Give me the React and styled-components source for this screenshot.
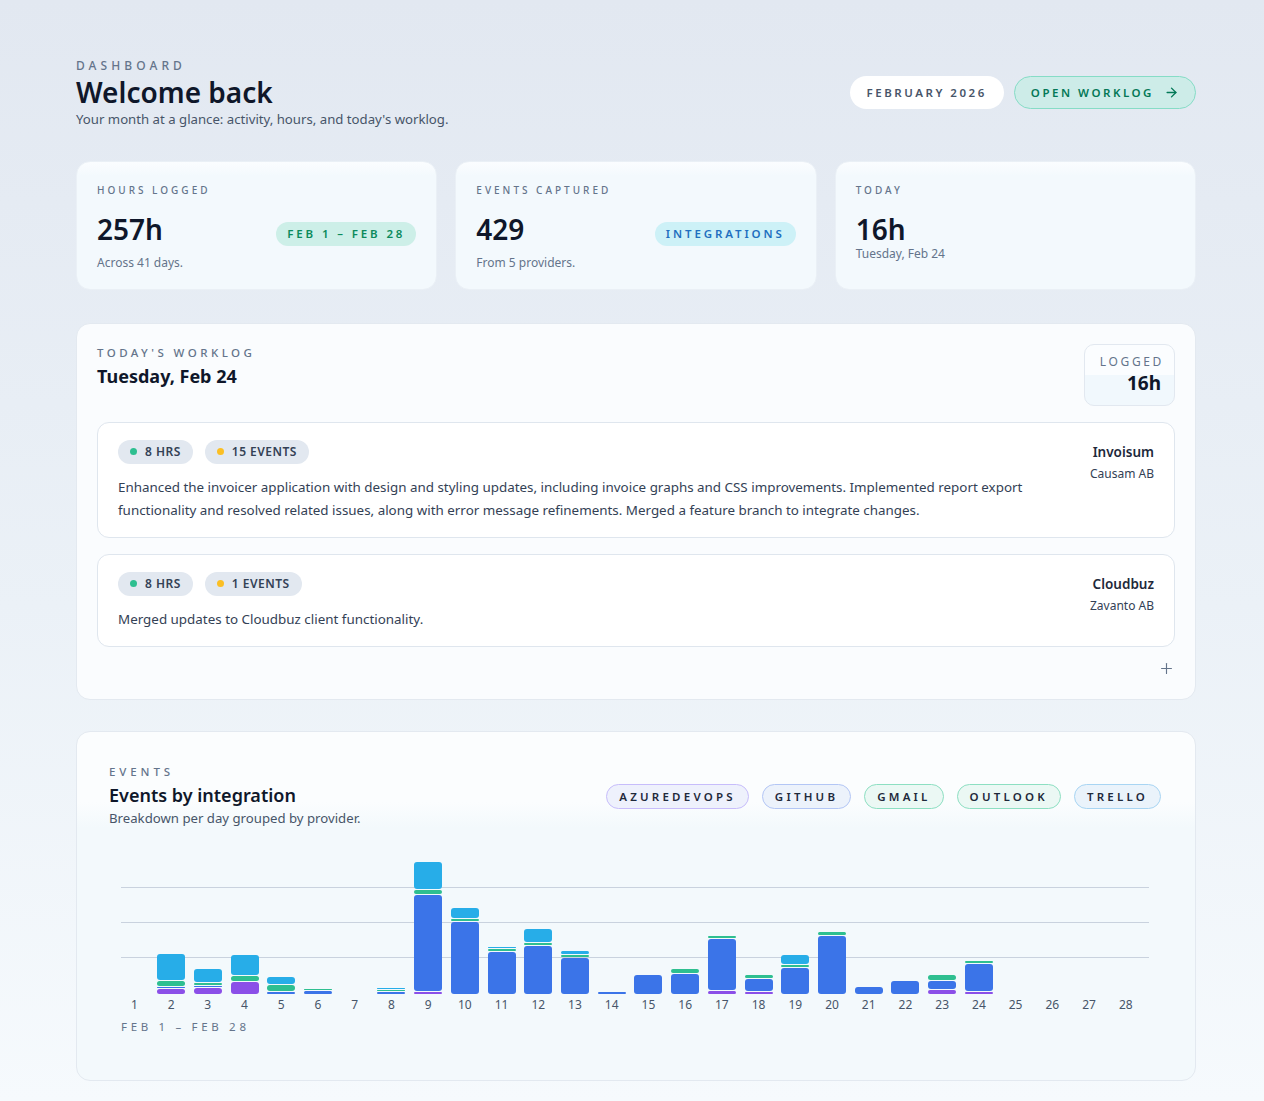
import React from 'react'
import styled, { createGlobalStyle } from 'styled-components';
import { ArrowRight, Plus } from 'lucide-react';

const GlobalStyle = createGlobalStyle`
  * { box-sizing: border-box; }
  body {
    margin: 0;
    font-family: "Segoe UI", "Noto Sans", sans-serif;
    color: #0f172a;
    background: linear-gradient(180deg, #e2e8f1 0%, #ebf1f7 55%, #f6fafd 100%);
    min-height: 1101px;
  }
`;

const Page = styled.div`
  width: 1120px;
  margin-left: 76px;
  padding: 58px 0 20px;
`;

const Header = styled.header`
  display: flex;
  align-items: center;
  justify-content: space-between;
`;

const Eyebrow = styled.div`
  font-size: ${p => p.$size || 11}px;
  letter-spacing: ${p => p.$track || 0.3}em;
  text-transform: uppercase;
  color: #64748b;
  font-weight: 500;
  line-height: 1.3;
`;

const Title = styled.h1`
  margin: 2px 0 0;
  font-size: 28px;
  font-weight: 600;
  line-height: 1.15;
  color: #0f172a;
`;

const Subtitle = styled.p`
  margin: ${p => p.$mt || 2}px 0 0;
  font-size: 13.2px;
  color: #475569;
`;

const Actions = styled.div`
  display: flex;
  gap: 10px;
`;

const Pill = styled.div`
  display: inline-flex;
  align-items: center;
  gap: 10px;
  height: 33px;
  padding: 0 16px;
  border-radius: 17px;
  font-size: 11.5px;
  font-weight: 600;
  letter-spacing: 0.22em;
  background: ${p => p.$bg || '#fff'};
  color: ${p => p.$color || '#475569'};
  border: 1px solid ${p => p.$border || 'transparent'};
`;

const Stats = styled.div`
  display: grid;
  grid-template-columns: repeat(3, 1fr);
  gap: 18px;
  margin-top: 33px;
`;

const StatCard = styled.div`
  height: 129px;
  padding: 22px 20px 0;
  border-radius: 14px;
  border: 1px solid #eaf0f6;
  background: linear-gradient(180deg, #fbfdff 0px, #f3f9fd 14px, #f3f9fd 100%);
`;

const StatRow = styled.div`
  display: flex;
  align-items: flex-end;
  justify-content: space-between;
  margin-top: 16px;
`;

const StatValue = styled.div`
  font-size: 28px;
  font-weight: 600;
  line-height: 32px;
  color: #0f172a;
`;

const StatNote = styled.div`
  font-size: 12px;
  color: #64748b;
  margin-top: ${p => p.$tight ? 0 : 9}px;
`;

const Tag = styled.span`
  display: inline-flex;
  align-items: center;
  height: 24px;
  padding: 0 11px;
  border-radius: 12px;
  font-size: 11.5px;
  font-weight: 600;
  letter-spacing: 0.25em;
  margin-bottom: -1px;
  background: ${p => p.$bg};
  color: ${p => p.$color};
`;

const Panel = styled.section`
  margin-top: ${p => p.$mt || 33}px;
  border-radius: 14px;
  border: 1px solid #e3e9f0;
  background: #fafcfe;
  padding: ${p => p.$pad || '20px 20px 22px'};
`;

const EventsPanel = styled(Panel)`
  background: linear-gradient(180deg, #fbfdfe 0, #fbfdfe 70px, #f3f9fc 96px);
`;

const PanelHead = styled.div`
  display: flex;
  justify-content: space-between;
  align-items: ${p => p.$center ? 'center' : 'flex-start'};
`;

const HeadText = styled.div`
  padding-top: ${p => p.$pt || 0}px;
`;

const DayTitle = styled.div`
  font-size: 18px;
  font-weight: ${p => p.$weight || 700};
  color: #0f172a;
  margin-top: ${p => p.$mt || 2}px;
`;

const LoggedBox = styled.div`
  width: 91px;
  height: 62px;
  border: 1px solid #e2e8f0;
  border-radius: 10px;
  background: linear-gradient(180deg, #fbfdff 50%, #f1f8fd 50%);
  text-align: right;
  padding: 8px 13px 0;
`;

const LoggedLabel = styled.div`
  font-size: 12px;
  letter-spacing: 0.22em;
  color: #64748b;
  margin-right: -3px;
`;

const LoggedValue = styled.div`
  font-size: 19px;
  font-weight: 700;
  color: #0f172a;
  line-height: 26px;
`;

const Entries = styled.div`
  display: flex;
  flex-direction: column;
  gap: 16px;
  margin-top: 16px;
`;

const Entry = styled.div`
  display: flex;
  gap: 20px;
  padding: 17px 20px 15px;
  border: 1px solid #dfe6ee;
  border-radius: 12px;
  background: #fff;
`;

const EntryMain = styled.div`
  flex: 1;
`;

const Badges = styled.div`
  display: flex;
  gap: 12px;
`;

const Badge = styled.span`
  display: inline-flex;
  align-items: center;
  gap: 8px;
  height: 24px;
  padding: 0 12px;
  border-radius: 12px;
  background: #e2e8f0;
  color: #334155;
  font-size: 12px;
  font-weight: 600;
  letter-spacing: 0.04em;
`;

const Dot = styled.i`
  width: 7px;
  height: 7px;
  border-radius: 50%;
  background: ${p => p.$color};
`;

const Desc = styled.p`
  margin: 12px 0 0;
  font-size: 13.4px;
  line-height: 23px;
  color: #334155;
`;

const Meta = styled.div`
  width: 90px;
  text-align: right;
  padding-top: 3px;
`;

const Client = styled.div`
  font-size: 13.5px;
  font-weight: 600;
  color: #1e293b;
`;

const Company = styled.div`
  font-size: 12px;
  color: #334155;
  margin-top: 4px;
`;

const AddRow = styled.div`
  display: flex;
  justify-content: flex-end;
  padding: 13px 0 0;
  color: #64748b;
`;

const Providers = styled.div`
  display: flex;
  gap: 13px;
  margin-top: 2px;
`;

const Provider = styled.span`
  display: inline-flex;
  align-items: center;
  height: 25px;
  padding: 0 12px;
  border-radius: 13px;
  font-size: 11.5px;
  font-weight: 600;
  letter-spacing: 0.28em;
  color: #1e293b;
  border: 1px solid ${p => p.$border};
  background: ${p => p.$bg};
`;

const ChartWrap = styled.div`
  margin-top: 24px;
  padding: 0 12px;
`;

const Plot = styled.div`
  position: relative;
  height: 143px;
  display: flex;
  align-items: flex-end;
  margin-left: -5px;
  margin-right: 5px;
`;

const GridLine = styled.div`
  position: absolute;
  left: 5px;
  right: -5px;
  height: 1px;
  background: #c9d2de;
  bottom: ${p => p.$at}px;
`;

const Column = styled.div`
  position: relative;
  flex: 1;
  display: flex;
  flex-direction: column-reverse;
  align-items: center;
  gap: 1px;
`;

const Segment = styled.div`
  width: 28px;
  border-radius: 3px;
  background: ${p => p.$color};
`;

const Labels = styled.div`
  display: flex;
  margin: 2px 5px 0 -5px;
`;

const DayLabel = styled.span`
  flex: 1;
  text-align: center;
  font-size: 12px;
  color: #475569;
`;

const Range = styled.div`
  margin-top: 6px;
  font-size: 11.5px;
  letter-spacing: 0.32em;
  color: #64748b;
`;

const COLORS = ['#8b4fe8', '#3b74e8', '#2ebf90', '#27ade8'];

// purple, blue, green, sky (px)
const DAYS = [
  [0, 0, 0, 0], [5, 1, 5, 26], [6, 1, 2, 13], [12, 0, 5, 20], [0, 2, 6, 7],
  [0, 3, 1, 0], [0, 0, 0, 0], [0, 2, 1, 1], [2, 96, 4, 27], [0, 72, 2, 10],
  [0, 42, 2, 1], [0, 48, 2, 13], [0, 36, 2, 3], [0, 2, 0, 0], [0, 19, 0, 0],
  [0, 20, 4, 0], [3, 51, 2, 0], [2, 12, 3, 0], [0, 26, 2, 9], [0, 58, 3, 0],
  [0, 7, 0, 0], [0, 13, 0, 0], [4, 8, 5, 0], [2, 27, 2, 0],
  [0, 0, 0, 0], [0, 0, 0, 0], [0, 0, 0, 0], [0, 0, 0, 0],
];

const entries = [
  {
    hrs: '8 HRS', events: '15 EVENTS', client: 'Invoisum', company: 'Causam AB',
    text: 'Enhanced the invoicer application with design and styling updates, including invoice graphs and CSS improvements. Implemented report export functionality and resolved related issues, along with error message refinements. Merged a feature branch to integrate changes.',
  },
  {
    hrs: '8 HRS', events: '1 EVENTS', client: 'Cloudbuz', company: 'Zavanto AB',
    text: 'Merged updates to Cloudbuz client functionality.',
  },
];

const providers = [
  { name: 'AZUREDEVOPS', border: '#c7bdfb', bg: '#eef1fc' },
  { name: 'GITHUB', border: '#b3c6f5', bg: '#ecf2fb' },
  { name: 'GMAIL', border: '#8ddfc2', bg: '#ebf8f4' },
  { name: 'OUTLOOK', border: '#8ddfc2', bg: '#ebf8f4' },
  { name: 'TRELLO', border: '#a8d5f3', bg: '#eaf3fb' },
];

export default function App() {
  return (
    <>
      <GlobalStyle />
      <Page>
        <Header>
          <div>
            <Eyebrow $size={12} $track={0.34}>Dashboard</Eyebrow>
            <Title>Welcome back</Title>
            <Subtitle>Your month at a glance: activity, hours, and today's worklog.</Subtitle>
          </div>
          <Actions>
            <Pill>FEBRUARY 2026</Pill>
            <Pill $bg="#cdece8" $border="#86dcc6" $color="#047857">
              OPEN WORKLOG <ArrowRight size={15} strokeWidth={2.2} />
            </Pill>
          </Actions>
        </Header>

        <Stats>
          <StatCard>
            <Eyebrow $size={10}>Hours logged</Eyebrow>
            <StatRow>
              <StatValue>257h</StatValue>
              <Tag $bg="#cdefe8" $color="#0b8a5c">FEB 1 – FEB 28</Tag>
            </StatRow>
            <StatNote>Across 41 days.</StatNote>
          </StatCard>
          <StatCard>
            <Eyebrow $size={10}>Events captured</Eyebrow>
            <StatRow>
              <StatValue>429</StatValue>
              <Tag $bg="#cdf1f7" $color="#1f6fbf">INTEGRATIONS</Tag>
            </StatRow>
            <StatNote>From 5 providers.</StatNote>
          </StatCard>
          <StatCard>
            <Eyebrow $size={10}>Today</Eyebrow>
            <StatRow>
              <StatValue>16h</StatValue>
            </StatRow>
            <StatNote $tight>Tuesday, Feb 24</StatNote>
          </StatCard>
        </Stats>

        <Panel>
          <PanelHead>
            <HeadText $pt={2}>
              <Eyebrow $size={11.5} $track={0.3}>Today's worklog</Eyebrow>
              <DayTitle $mt={3}>Tuesday, Feb 24</DayTitle>
            </HeadText>
            <LoggedBox>
              <LoggedLabel>LOGGED</LoggedLabel>
              <LoggedValue>16h</LoggedValue>
            </LoggedBox>
          </PanelHead>
          <Entries>
            {entries.map(e => (
              <Entry key={e.client}>
                <EntryMain>
                  <Badges>
                    <Badge><Dot $color="#2ebf90" />{e.hrs}</Badge>
                    <Badge><Dot $color="#fbbf24" />{e.events}</Badge>
                  </Badges>
                  <Desc>{e.text}</Desc>
                </EntryMain>
                <Meta>
                  <Client>{e.client}</Client>
                  <Company>{e.company}</Company>
                </Meta>
              </Entry>
            ))}
          </Entries>
          <AddRow><Plus size={17} strokeWidth={1.6} /></AddRow>
        </Panel>

        <EventsPanel $mt={31} $pad="33px 34px 46px 32px">
          <PanelHead $center>
            <HeadText>
              <Eyebrow $size={11.5} $track={0.34}>Events</Eyebrow>
              <DayTitle $weight={600} $mt={3}>Events by integration</DayTitle>
              <Subtitle $mt={2}>Breakdown per day grouped by provider.</Subtitle>
            </HeadText>
            <Providers>
              {providers.map(p => (
                <Provider key={p.name} $border={p.border} $bg={p.bg}>{p.name}</Provider>
              ))}
            </Providers>
          </PanelHead>
          <ChartWrap>
            <Plot>
              <GridLine $at={36} />
              <GridLine $at={71} />
              <GridLine $at={106} />
              {DAYS.map((d, i) => (
                <Column key={i}>
                  {d.map((h, j) => h > 0 && <Segment key={j} $color={COLORS[j]} style={{ height: h }} />)}
                </Column>
              ))}
            </Plot>
            <Labels>
              {DAYS.map((_, i) => <DayLabel key={i}>{i + 1}</DayLabel>)}
            </Labels>
            <Range>FEB 1 – FEB 28</Range>
          </ChartWrap>
        </EventsPanel>
      </Page>
    </>
  )
}
